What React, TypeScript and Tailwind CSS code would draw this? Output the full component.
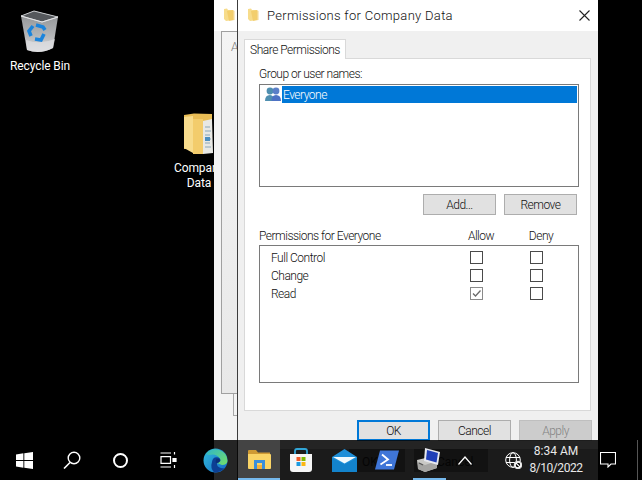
const Perm = ({ name, allow }: { name: string; allow?: boolean }) => (
  <div className="flex items-center h-[18px]">
    <span className="w-[210px] pl-[11px] text-[#111] pt-[1px]">{name}</span>
    <Check checked={allow} />
    <div className="w-[47px]" />
    <Check />
  </div>
);

const Check = ({ checked }: { checked?: boolean }) => (
  <div className={`w-[13px] h-[13px] border bg-white flex items-center justify-center ${checked ? "border-[#8a8a8a]" : "border-[#4a4a4a]"}`}>
    {checked && (
      <svg width="11" height="11" viewBox="0 0 11 11">
        <path d="M2 5.5 L4.5 8 L9.5 2.5" fill="none" stroke="#6a6a6a" strokeWidth="1.3" />
      </svg>
    )}
  </div>
);

const Btn = ({ label, cls }: { label: string; cls: string }) => (
  <div className={`w-[73px] h-[21px] flex items-center justify-center ${cls}`}>{label}</div>
);

const SmallFolder = () => (
  <svg width="11" height="14" viewBox="0 0 11 14">
    <path d="M0 1 L3 0.5 L4 2 L9 2 L9 12 L2 13 L0 11 Z" fill="#f7dc8b" />
    <path d="M3 3 L9 2 L10.5 3 L10.5 12 L5 13 Z" fill="#f1c75f" opacity="0.7" />
  </svg>
);

const BigFolder = () => (
  <svg width="30" height="42" viewBox="0 0 30 42">
    <path d="M0 2 L10 0.5 L28 1 L28 36 L0 36 Z" fill="#e9bd55" />
    <path d="M0 4 L9 3 L9 40 L0 35 Z" fill="#f8dc8d" />
    <path d="M9 6 L19 6 L19 41 L9 41 Z" fill="#f3cc6c" />
    <path d="M19 8 L28 6 L29 40 L19 41 Z" fill="#e8e8e4" />
    <path d="M21 14h5M21 18h6M21 22h5M21 26h6M21 30h5M21 34h6" stroke="#8aa6b8" strokeWidth="1.2" />
    <path d="M21 24h5v4h-5z" fill="#4d8fc0" />
  </svg>
);

const RecycleBin = () => (
  <svg width="40" height="43" viewBox="0 0 40 43">
    <defs>
      <linearGradient id="binBody" x1="0" x2="0" y1="0" y2="1">
        <stop offset="0" stopColor="#8d8f92" />
        <stop offset="0.6" stopColor="#b4b6b8" />
        <stop offset="1" stopColor="#dcdde0" />
      </linearGradient>
    </defs>
    <path d="M1 6 L14 1 L38 7 L33 38 Q20 45 7 40 Z" fill="url(#binBody)" />
    <path d="M1 6 L14 1 L38 7 L22 12 Z" fill="#55585c" stroke="#c9cbce" strokeWidth="1" />
    <path d="M1 6 L22 12 L38 7" fill="none" stroke="#e3e4e6" strokeWidth="1" />
    <path d="M6 30 Q20 35 35 29 L33 38 Q20 45 7 40 Z" fill="#dfe0e3" opacity="0.7" />
    <g fill="none" stroke="#1b84dc" strokeWidth="3.6">
      <path d="M11 26 L9 21 L13 16" />
      <path d="M16 15 L23 17 L25 20" />
      <path d="M24 24 L21 30 L15 29" />
    </g>
  </svg>
);

const WinLogo = () => (
  <svg width="17" height="17" viewBox="0 0 17 17" fill="#fff">
    <path d="M0 2.4 L7.4 1.3 V8 H0 Z" />
    <path d="M8.3 1.2 L17 0 V8 H8.3 Z" />
    <path d="M0 9 H7.4 V15.7 L0 14.6 Z" />
    <path d="M8.3 9 H17 V17 L8.3 15.8 Z" />
  </svg>
);

const Search = () => (
  <svg width="18" height="18" viewBox="0 0 18 18" fill="none" stroke="#fff">
    <circle cx="11" cy="7" r="5.8" strokeWidth="1.4" />
    <path d="M7 11.5 L1 17.5" strokeWidth="1.6" />
  </svg>
);

const TaskView = () => (
  <svg width="17" height="16" viewBox="0 0 17 16" fill="none" stroke="#fff" strokeWidth="1.2">
    <path d="M0.5 1 H11 M0.5 15 H11" />
    <path d="M1 4.6 H10.5 V11.4 H1 Z" />
    <path d="M14.5 0 V2.5 M14.5 13 V16" />
    <path d="M13 6.5 H16 V9.5 H13 Z" fill="#fff" />
  </svg>
);

const Edge = () => (
  <svg width="25" height="25" viewBox="0 0 25 25">
    <defs>
      <linearGradient id="edgeA" x1="0" x2="1" y1="0.2" y2="1">
        <stop offset="0" stopColor="#2fb4d8" />
        <stop offset="1" stopColor="#1468c8" />
      </linearGradient>
      <linearGradient id="edgeB" x1="0" x2="1" y1="0" y2="0.8">
        <stop offset="0" stopColor="#2fb6c9" />
        <stop offset="1" stopColor="#6edb70" />
      </linearGradient>
    </defs>
    <circle cx="12.5" cy="12.5" r="12" fill="url(#edgeA)" />
    <path d="M3 6 A12 12 0 0 1 24.5 13 Q24 17 19 17 L14 15 Q18 13 16.5 10 Q13 5 6 7 Z" fill="url(#edgeB)" />
    <path d="M9 14 Q9.5 9.5 13.5 9.3 Q17.5 9.6 17.5 12.7 Q16 15 14 15 Q13.5 19 18 20 Q20 20.5 21.5 20 Q17 25 11 24.3 Q7 20 9 14 Z" fill="#0c3f94" />
    <path d="M13.5 10.7 Q17 10.5 17 13 Q15.5 15 13 15 Q12 13 13.5 10.7 Z" fill="#0b2f78" />
  </svg>
);

const Explorer = () => (
  <svg width="23" height="20" viewBox="0 0 23 20">
    <path d="M0 1 Q0 0 1 0 H8 L10 2.5 H22 V6 H0 Z" fill="#cf9a34" />
    <path d="M0 4 H22 Q23 4 23 5 V18 Q23 19 22 19 H1 Q0 19 0 18 Z" fill="#fad466" />
    <path d="M6 10 H17 V19 H14 V13 H9 V19 H6 Z" fill="#3a8fdc" />
    <path d="M9 15 H14 V19 H9 Z" fill="#f3b13b" />
  </svg>
);

const Store = () => (
  <svg width="24" height="24" viewBox="0 0 24 24">
    <path d="M6 7 V3 Q6 1 8 1 H16 Q18 1 18 3 V7" fill="none" stroke="#31a5d6" strokeWidth="1.8" />
    <path d="M1 6 H23 V21 Q23 24 20 24 H4 Q1 24 1 21 Z" fill="#f6f6f6" />
    <rect x="7.5" y="9" width="4" height="4" fill="#ef5a28" />
    <rect x="12.5" y="9" width="4" height="4" fill="#7fba00" />
    <rect x="7.5" y="14" width="4" height="4" fill="#1d9be0" />
    <rect x="12.5" y="14" width="4" height="4" fill="#fcb713" />
  </svg>
);

const Mail = () => (
  <svg width="25" height="23" viewBox="0 0 25 23">
    <path d="M0 8 L12.5 0 L25 8 V23 H0 Z" fill="#1f8fd8" />
    <path d="M1 8 H24 L12.5 14.5 Z" fill="#f2fafd" />
    <path d="M0 9 L12.5 15.5 L25 9 V23 H0 Z" fill="#1383cc" />
  </svg>
);

const PowerShell = () => (
  <svg width="24" height="20" viewBox="0 0 24 20">
    <path d="M5 0.5 H24 L19 19.5 H0 Z" fill="#3f76d8" />
    <path d="M7 4.5 L13 9.5 L5.5 14.5" fill="none" stroke="#fff" strokeWidth="1.8" />
    <path d="M11 15 H17" stroke="#fff" strokeWidth="1.8" />
  </svg>
);

const ServerMgr = () => (
  <svg width="26" height="24" viewBox="0 0 26 24">
    <path d="M0 12 L13 9 L20 12 V20 L8 24 L1 21 Z" fill="#c9c9c6" />
    <path d="M1 14 L8 17 L20 13 V20 L8 24 L1 21 Z" fill="#a5a5a3" />
    <path d="M8 0 L23 4 L21 17 L7 13 Z" fill="#e6e8ee" />
    <path d="M10 2 L21 5 L19.5 14.5 L9 11.5 Z" fill="#1f3fb8" />
    <path d="M2 15 L6 17" stroke="#555" strokeWidth="1.2" />
  </svg>
);

const GlobeBlocked = () => (
  <svg width="17" height="17" viewBox="0 0 17 17" fill="none" stroke="#fff" strokeWidth="1">
    <circle cx="8" cy="8" r="7.3" />
    <ellipse cx="8" cy="8" rx="3.4" ry="7.3" />
    <path d="M1 5.5 H15 M1 10.5 H15" />
    <circle cx="13" cy="13" r="3.8" fill="#000" />
    <circle cx="13" cy="13" r="2.8" strokeWidth="1.1" />
    <path d="M11 11 L15 15" strokeWidth="1.1" />
  </svg>
);

const Slot = ({ w, children, active, underline }: { w: string; children?: React.ReactNode; active?: boolean; underline?: boolean }) => (
  <div className={`${w} h-full relative flex items-center justify-center shrink-0 ${active ? "bg-white/15" : ""}`}>
    {children}
    {underline && <div className="absolute bottom-0 left-[5px] right-[6px] h-[2px] bg-[#76b9ed]" />}
    {active && <div className="absolute bottom-0 left-0 right-0 h-[2px] bg-[#76b9ed]" />}
  </div>
);

export default function App() {
  return (
    <div className="relative w-[642px] h-[480px] bg-black overflow-hidden font-['Roboto','Liberation_Sans',sans-serif] font-light whitespace-nowrap">
      <div className="absolute left-[10px] top-[10px] w-[60px] flex flex-col items-center">
        <RecycleBin />
        <span className="mt-[6px] text-[12px] leading-[15px] tracking-[-0.1px] text-white font-normal">Recycle Bin</span>
      </div>

      <div className="absolute left-[169px] top-[113px] w-[60px] flex flex-col items-center">
        <BigFolder />
        <span className="mt-[6px] text-[12px] leading-[15px] tracking-[-0.1px] text-white font-normal text-center">Company<br />Data</span>
      </div>

      {/* back window */}
      <div className="absolute left-[214px] top-0 w-[30px] h-[480px] bg-[#f3f3f3] flex flex-col">
        <div className="h-[31px] bg-white pl-[10px] pt-[8px] shrink-0"><SmallFolder /></div>
        <div className="ml-[7px] h-[363px] border-l border-t border-b border-[#a0a0a0] bg-gradient-to-b from-[#f4f4f4] to-[#e8e8e8]">
          <div className="pl-[9px] pt-[6px] text-[12px] text-[#777]">A</div>
        </div>
        <div className="ml-[19px] h-[22px] border-l border-b border-[#a8a8a8]" />
      </div>

      {/* front dialog */}
      <div className="absolute left-[237px] top-0 w-[361px] h-[480px] border-l border-[#3c3c3c] bg-[#f0f0f0] flex flex-col text-[#111] text-[12px] tracking-[-0.5px]">
        <div className="h-[31px] bg-white flex items-center shrink-0">
          <div className="ml-[10px] w-[19px] mt-[-2px]"><SmallFolder /></div>
          <span className="text-[13px] tracking-[0.3px] text-[#111]">Permissions for Company Data</span>
          <svg className="ml-auto mr-[8px]" width="11" height="11" viewBox="0 0 11 11" stroke="#222" strokeWidth="1.1">
            <path d="M0.5 0.5 L10.5 10.5 M10.5 0.5 L0.5 10.5" />
          </svg>
        </div>
        <div className="ml-[6px] mt-[8px] w-[102px] h-[20px] bg-white border border-b-0 border-[#d9d9d9] flex items-center justify-center relative z-10">Share Permissions</div>
        <div className="ml-[6px] w-[347px] h-[353px] mt-[-1px] bg-white border border-[#d9d9d9] pl-[14px] pt-[8px]">
          <div className="w-[320px]">
            <div className="leading-[15px] h-[17px]">Group or user names:</div>
            <div className="h-[103px] border border-[#7a7a7a] p-[1px]">
              <div className="flex h-[17px] items-center">
                <svg className="ml-[4px] mr-[1px]" width="16" height="15" viewBox="0 0 16 15">
                  <circle cx="5" cy="4" r="3.4" fill="#4f8fb0" />
                  <path d="M0 14 Q0 8 5 8 Q9 8 9 14 Z" fill="#4f8fb0" />
                  <circle cx="11" cy="4" r="3.4" fill="#5b7fc8" />
                  <path d="M6.5 14 Q6.5 8 11 8 Q16 8 16 14 Z" fill="#4e72c4" />
                </svg>
                <div className="flex-1 h-full bg-[#0078d7] text-white flex items-center pl-[1px] pt-[1px]">Everyone</div>
              </div>
            </div>
            <div className="flex justify-end gap-[8px] mt-[7px] mr-[2px]">
              <Btn label="Add..." cls="bg-[#e1e1e1] border border-[#adadad]" />
              <Btn label="Remove" cls="bg-[#e1e1e1] border border-[#adadad]" />
            </div>
            <div className="flex h-[15px] mt-[14px] leading-[15px] mb-[1px]">
              <span className="w-[194px]">Permissions for Everyone</span>
              <span className="w-[56px] text-center">Allow</span>
              <span className="w-[4px]" />
              <span className="w-[56px] text-center">Deny</span>
            </div>
            <div className="h-[138px] border border-[#7a7a7a] pt-[2px]">
              <Perm name="Full Control" />
              <Perm name="Change" />
              <Perm name="Read" allow />
            </div>
          </div>
        </div>
        <div className="flex gap-[8px] ml-[119px] mt-[9px]">
          <Btn label="OK" cls="bg-[#e1e1e1] border-2 border-[#0078d7]" />
          <Btn label="Cancel" cls="bg-[#e1e1e1] border border-[#adadad]" />
          <Btn label="Apply" cls="bg-[#cccccc] border border-[#bfbfbf] text-[#838383]" />
        </div>
      </div>

      {/* taskbar */}
      <div className="absolute left-0 right-0 bottom-0 h-[40px] bg-black/85 flex items-center text-white font-normal">
        <div className="absolute left-[280px] top-[9px] bottom-0 w-[318px] bg-black/25" />
        <div className="absolute left-[349px] top-[9px] w-[56px] h-[23px] bg-black/30" />
        <div className="absolute left-[414px] top-[9px] w-[74px] h-[23px] bg-black/30" />
        <span className="absolute left-[362px] top-[13px] text-[12px] text-[#050505]">OK</span>
        <span className="absolute left-[437px] top-[13px] text-[12px] text-[#050505]">Cancel</span>
        <Slot w="w-[48px]"><WinLogo /></Slot>
        <Slot w="w-[48px]"><Search /></Slot>
        <Slot w="w-[48px]">
          <div className="w-[15px] h-[15px] rounded-full border-2 border-white" />
        </Slot>
        <Slot w="w-[48px]"><TaskView /></Slot>
        <Slot w="w-[46px]"><Edge /></Slot>
        <Slot w="w-[42px]" active><Explorer /></Slot>
        <Slot w="w-[42px]"><Store /></Slot>
        <Slot w="w-[44px]"><Mail /></Slot>
        <Slot w="w-[42px]"><PowerShell /></Slot>
        <Slot w="w-[44px]" underline><ServerMgr /></Slot>
        <Slot w="w-[26px]">
          <svg width="14" height="9" viewBox="0 0 14 9" fill="none" stroke="#fff" strokeWidth="1.2">
            <path d="M0.5 8.5 L7 1 L13.5 8.5" />
          </svg>
        </Slot>
        <div className="w-[22px] shrink-0" />
        <Slot w="w-[26px]"><GlobeBlocked /></Slot>
        <div className="w-[60px] shrink-0 flex flex-col items-center text-[12px] leading-[17px] text-[#e8e8e8] relative">
          <span className="tracking-[0px]">8:34 AM</span>
          <span className="tracking-[-0.45px]">8/10/2022</span>
        </div>
        <div className="w-[44px] flex justify-center shrink-0">
          <svg width="16" height="16" viewBox="0 0 16 16" fill="none" stroke="#fff" strokeWidth="1.1">
            <path d="M0.5 0.5 H15.5 V12 H11 L8 15 V12 H0.5 Z" />
          </svg>
        </div>
        <div className="absolute left-[637px] top-0 bottom-0 w-px bg-[#555]" />
      </div>
    </div>
  );
}
